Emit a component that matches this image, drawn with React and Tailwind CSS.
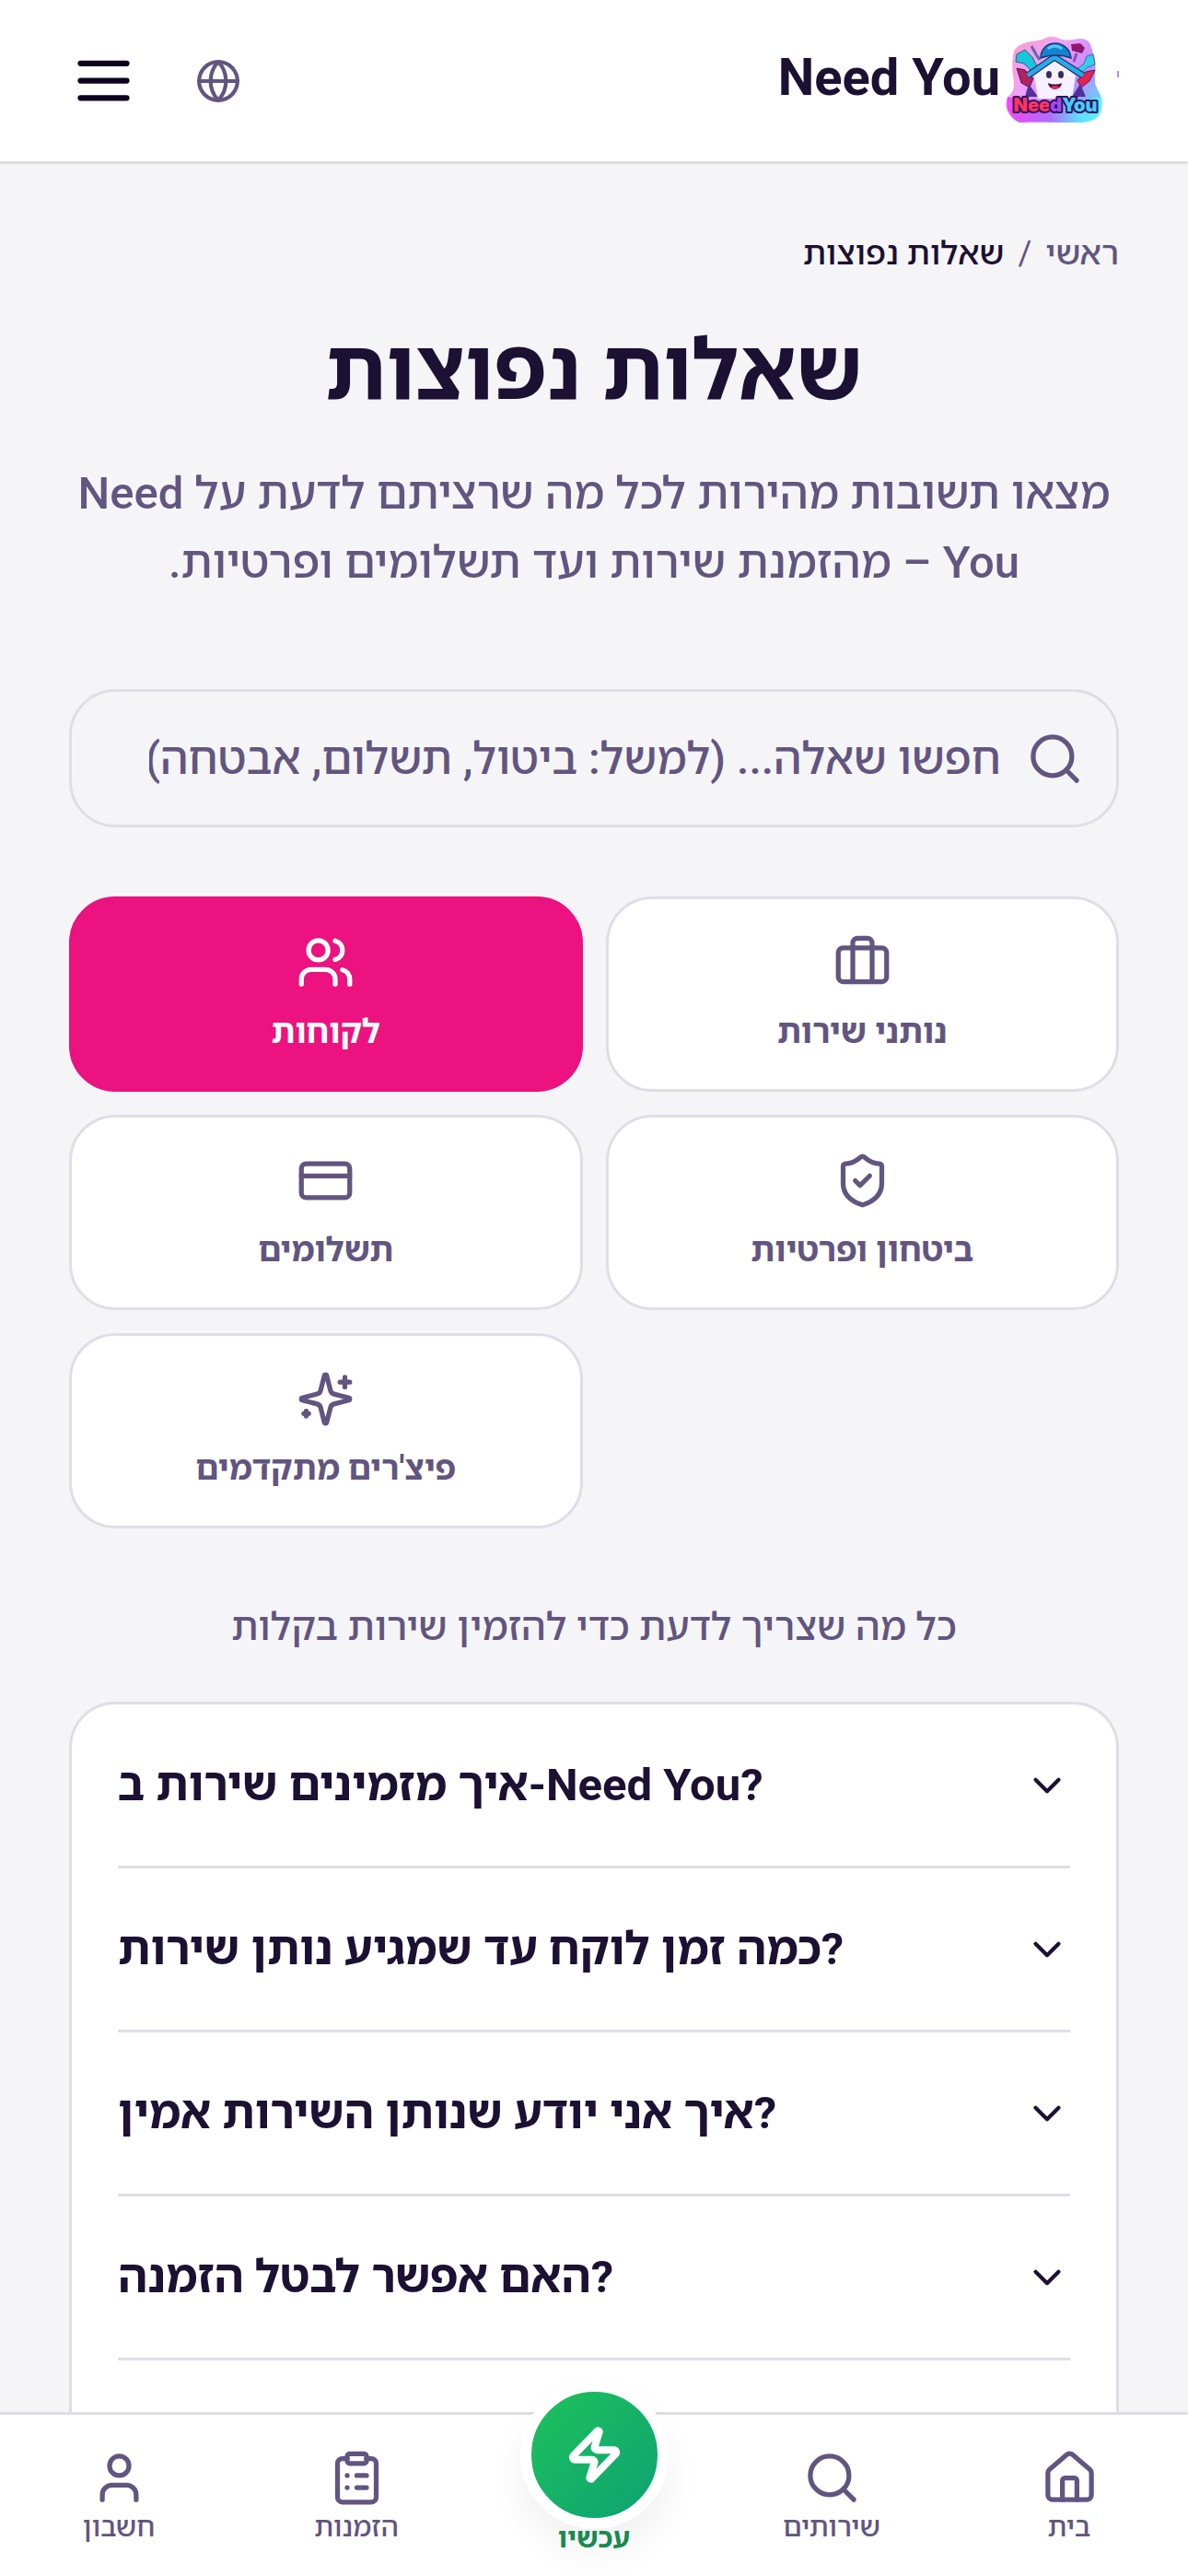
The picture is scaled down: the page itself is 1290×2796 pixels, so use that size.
import {
  Briefcase,
  ChevronDown,
  ClipboardList,
  CreditCard,
  Globe,
  House,
  Search,
  ShieldCheck,
  User,
  Users,
  Zap,
} from 'lucide-react';

const SparklesIcon = ({ className, strokeWidth = 2 }) => (
  <svg
    viewBox="0 0 24 24"
    fill="none"
    stroke="currentColor"
    strokeWidth={strokeWidth}
    strokeLinecap="round"
    strokeLinejoin="round"
    className={className}
    aria-hidden="true"
  >
    <path d="M9.937 15.5A2 2 0 0 0 8.5 14.063l-6.135-1.582a.5.5 0 0 1 0-.962L8.5 9.936A2 2 0 0 0 9.937 8.5l1.582-6.135a.5.5 0 0 1 .963 0L14.063 8.5A2 2 0 0 0 15.5 9.937l6.135 1.581a.5.5 0 0 1 0 .964L15.5 14.063a2 2 0 0 0-1.437 1.437l-1.582 6.135a.5.5 0 0 1-.963 0z" />
    <path d="M20 3v4" />
    <path d="M22 5h-4" />
    <path d="M4 17v2" />
    <path d="M5 18H3" />
  </svg>
);

const MenuIcon = ({ className }) => (
  <svg viewBox="0 0 24 24" fill="none" stroke="currentColor" strokeWidth="2" strokeLinecap="round" className={className} aria-hidden="true">
    <path d="M4 6h16M4 12h16M4 18h16" />
  </svg>
);

const categories = [
  { id: 'customers', label: 'לקוחות', icon: Users, active: true },
  { id: 'providers', label: 'נותני שירות', icon: Briefcase },
  { id: 'payments', label: 'תשלומים', icon: CreditCard },
  { id: 'security', label: 'ביטחון ופרטיות', icon: ShieldCheck },
  { id: 'advanced', label: "פיצ'רים מתקדמים", icon: SparklesIcon },
];

const questions = [
  'איך מזמינים שירות ב-Need You?',
  'כמה זמן לוקח עד שמגיע נותן שירות?',
  'איך אני יודע שנותן השירות אמין?',
  'האם אפשר לבטל הזמנה?',
];

const Logo = () => (
  <svg viewBox="0 0 125 125" className="h-[125px] w-[125px]" aria-hidden="true">
    <defs>
      <linearGradient id="splash" x1="0" y1="0.1" x2="1" y2="0.9">
        <stop offset="0" stopColor="#ff9ccb" />
        <stop offset="0.35" stopColor="#f0a2f7" />
        <stop offset="0.65" stopColor="#c08bff" />
        <stop offset="1" stopColor="#45e6ff" />
      </linearGradient>
      <linearGradient id="splashBase" x1="0" y1="0" x2="1" y2="0">
        <stop offset="0" stopColor="#f247f2" />
        <stop offset="0.45" stopColor="#b06bff" />
        <stop offset="0.75" stopColor="#5fdcff" />
        <stop offset="1" stopColor="#5ff0ff" />
      </linearGradient>
    </defs>
    <path
      d="M10 36c0-7 5-12 12-14 8-3 17-2 24-6 6-3 12 0 18 2 8 2 17-3 25 0 6 3 6 9 8 15 4 9 2 20 2 30 0 6 4 10 6 16 3 8-1 16-4 22-6 7-18 7-26 7-18 0-38-1-57 0-6-1-12-7-15-15-2-7 1-13 6-18 3-6 2-12 1-18-1-7-1-14 0-21z"
      fill="url(#splash)"
    />
    <path d="M4 80c22 6 78 6 102 0 2 9 0 18-4 22-6 6-18 6-26 6-18 0-38-1-57 0-6-1-12-7-15-14-1-5-1-9 0-14z" fill="url(#splashBase)" />
    <path d="M14 34l9-5 8 8 5 10-6 5-8-8-9-2z" fill="#19c5d8" stroke="#2c5c93" strokeWidth="1" />
    <path d="M30 25l5 9 4 6" stroke="#5a6cb0" strokeWidth="3" fill="none" />
    <path d="M97 34l-7 2-3 8-10 8 5 4 9-8 8-3z" fill="#35cbe9" stroke="#3b6fa8" strokeWidth="1" />
    <path d="M73 23l10-1 5 5-3 6-11-3z" fill="#94146d" />
    <path d="M79 33l-3 9" stroke="#8b4fb5" strokeWidth="3" />
    <path d="M14 49l9 2 9 9-4 10-9-5z" fill="#b3205e" stroke="#4b1d63" strokeWidth="1" />
    <path d="M99 51l-10 2-9 9 4 8 9-7z" fill="#e5234f" stroke="#4b1d63" strokeWidth="1" />
    <path d="M27 66l10 14H23zM83 66l-9 14h15z" fill="#51309a" />
    <path d="M55 39L33 57l4 25h37l4-25z" fill="#f6f0ff" />
    <path d="M26 57l29-20 31 20" fill="none" stroke="#14305e" strokeWidth="7" strokeLinejoin="round" />
    <path d="M26 57l29-20 31 20" fill="none" stroke="#2aa9ea" strokeWidth="5" strokeLinejoin="round" />
    <path d="M40 38c0-10 7-16 16-16s16 7 17 16c-10-4-23-4-33 0z" fill="#1583d1" stroke="#123b72" strokeWidth="1.5" />
    <path d="M48 28c4-4 11-4 15 0" fill="none" stroke="#54c8f5" strokeWidth="3" />
    <ellipse cx="49" cy="56" rx="3" ry="4" fill="#3b2b57" />
    <ellipse cx="62" cy="56" rx="3" ry="4" fill="#3b2b57" />
    <path d="M48 65c4 2 11 2 15 0-1 9-14 9-15 0z" fill="#4b0f36" />
    <path d="M51 69c3-1 6-1 9 0-2 3-7 3-9 0z" fill="#ff2a6e" />
    <text
      x="56"
      y="96"
      textAnchor="middle"
      fontSize="20"
      fontWeight="900"
      fontFamily="Inter, sans-serif"
      stroke="#34135f"
      strokeWidth="4"
      strokeLinejoin="round"
      paintOrder="stroke"
    >
      <tspan fill="#ff3461">Nee</tspan>
      <tspan fill="#a04bf0">d</tspan>
      <tspan fill="#45cdf7">You</tspan>
    </text>
    <path d="M124 52v7" stroke="#b98cff" strokeWidth="2" />
  </svg>
);

const Header = () => (
  <header className="flex shrink-0 items-center justify-between border-b-[3px] border-[#dfdee6] bg-white px-[75px] py-[25px]">
    <a href="#home" className="flex items-center gap-1 text-[#1c1033]">
      <Logo />
      <span className="pb-2 text-[56px] leading-[72px] font-bold">Need You</span>
    </a>
    <div className="flex items-center gap-[62px]">
      <button type="button" aria-label="שפה" className="text-[#625580]">
        <Globe className="h-[50px] w-[50px]" />
      </button>
      <button type="button" aria-label="תפריט" className="text-[#0d0321]">
        <MenuIcon className="h-[75px] w-[75px]" />
      </button>
    </div>
  </header>
);

const CategoryCard = ({ category }) => {
  const Icon = category.icon;
  return (
    <button
      type="button"
      dir="rtl"
      aria-pressed={Boolean(category.active)}
      className={
        category.active
          ? 'flex flex-col items-center gap-[19px] rounded-[50px] border-[3px] border-[#ec127f] bg-[#ec127f] py-[37px] text-white'
          : 'flex flex-col items-center gap-[19px] rounded-[50px] border-[3px] border-[#dfdee6] bg-white py-[37px] text-[#625580]'
      }
    >
      <Icon className="h-[63px] w-[63px]" />
      <span className="text-4xl leading-[50px] font-bold">{category.label}</span>
    </button>
  );
};

const FaqRow = ({ question }) => (
  <button
    type="button"
    dir="ltr"
    aria-expanded="false"
    className="flex w-full items-center justify-between border-b-[3px] border-[#dfdee6] py-[50px] text-left text-[49px] leading-[75px] font-bold text-[#1c1033]"
  >
    <span>{question}</span>
    <ChevronDown className="h-[50px] w-[50px]" />
  </button>
);

const NavItem = ({ href, label, icon: Icon }) => (
  <a href={href} className="flex flex-1 flex-col items-center pt-[37px] text-[#625580]">
    <Icon className="h-[63px] w-[63px]" />
    <span className="text-3xl leading-[44px] font-medium">{label}</span>
  </a>
);

const BottomNav = () => (
  <nav className="relative flex h-[178px] shrink-0 border-t-[3px] border-[#dfdee6] bg-white">
    <NavItem href="#home" label="בית" icon={House} />
    <NavItem href="#services" label="שירותים" icon={Search} />
    <a href="#now" className="-mt-[37px] flex flex-1 flex-col items-center text-[#178a4f]">
      <span className="flex h-[161px] w-[161px] shrink-0 items-center justify-center rounded-full border-[12px] border-white bg-linear-to-br from-[#1fc457] to-[#0c9f73] bg-origin-border text-white shadow-[0_24px_40px_rgba(0,0,0,0.06)]">
        <Zap className="h-[63px] w-[63px]" strokeWidth={3} />
      </span>
      <span className="relative -mt-2 text-3xl leading-9 font-bold">עכשיו</span>
    </a>
    <NavItem href="#orders" label="הזמנות" icon={ClipboardList} />
    <NavItem href="#account" label="חשבון" icon={User} />
  </nav>
);

const App = () => (
  <div
    dir="rtl"
    lang="he"
    className="flex h-screen flex-col bg-[#f5f5f8] font-[Roboto,'Noto_Sans_Hebrew','Open_Sans',sans-serif]"
  >
    <Header />

    <main className="min-h-0 flex-1 overflow-hidden px-[75px] pt-[72px]">
      <div className="flex gap-[15px] text-4xl leading-[50px]">
        <a href="#home" className="font-medium text-[#625580]">ראשי</a>
        <span className="text-[#625580]">/</span>
        <span className="font-medium text-[#1c1033]">שאלות נפוצות</span>
      </div>

      <div className="mt-[46px] text-center">
        <h1 className="text-[92px] leading-[112px] font-bold text-[#1c1033]">שאלות נפוצות</h1>
        <p className="mt-10 text-[49px] leading-[75px] font-medium text-[#625580]">
          מצאו תשובות מהירות לכל מה שרציתם לדעת על Need You – מהזמנת שירות ועד תשלומים ופרטיות.
        </p>
      </div>

      <label className="mt-[100px] flex h-[150px] items-center gap-[27px] rounded-[50px] border-[3px] border-[#dfdee6] ps-[35px] pe-[84px] text-[#625580]">
        <Search className="h-[63px] w-[63px] shrink-0" />
        <input
          type="text"
          aria-label="חיפוש שאלה"
          placeholder="חפשו שאלה... (למשל: ביטול, תשלום, אבטחה)"
          className="h-[100px] w-full min-w-0 bg-transparent text-5xl leading-[75px] font-medium outline-none placeholder:text-[#625580] placeholder:opacity-100"
        />
      </label>

      <div dir="ltr" className="mt-[75px] grid grid-cols-2 gap-[25px]">
        {categories.map((category) => (
          <CategoryCard key={category.id} category={category} />
        ))}
      </div>

      <p className="mt-[75px] text-center text-[42px] leading-[63px] font-medium text-[#625580]">
        כל מה שצריך לדעת כדי להזמין שירות בקלות
      </p>

      <section className="mt-[50px] rounded-[50px] border-[3px] border-[#dfdee6] bg-white px-[50px] pb-[200px]">
        {questions.map((question) => (
          <FaqRow key={question} question={question} />
        ))}
      </section>
    </main>

    <BottomNav />
  </div>
);

export default App;
